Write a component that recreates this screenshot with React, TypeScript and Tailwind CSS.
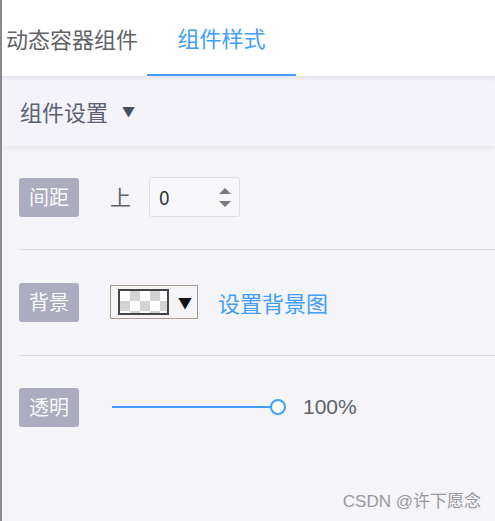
import React from "react";

const FONT = { fontFamily: '"Noto Sans CJK SC", "Noto Sans", sans-serif' };

// Small label badge on the left of each setting row
function Badge({ text }: { text: string }) {
  return (
    <div className="w-[60px] h-[39px] rounded-[3px] bg-[#abacc0] text-white/95 text-[20px] flex items-center justify-center shrink-0">
      {text}
    </div>
  );
}

export default function App() {
  return (
    <div
      className="w-[495px] h-[521px] overflow-hidden bg-[#f4f4f9] border-l-2 border-[#8a8a8a] flex flex-col"
      style={FONT}
    >
      {/* Tabs */}
      <div className="h-[76px] bg-white flex shrink-0">
        <div className="w-[145px] flex items-center pl-[4px] text-[22px] text-[#606266]">
          动态容器组件
        </div>
        <div className="w-[149px] flex items-center justify-center text-[22px] text-[#409eff] border-b-2 border-[#409eff]">
          组件样式
        </div>
      </div>

      {/* Section header */}
      <div className="h-[70px] shrink-0 bg-[#f3f3f9] flex items-center px-[18px] text-[22px] text-[#5c6075] shadow-[inset_0_5px_5px_-3px_rgba(0,0,0,0.07),0_3px_4px_rgba(0,0,0,0.05)] relative z-10">
        <span>组件设置</span>
        <span className="ml-[14px] text-[13px] text-[#4b4e63]">▼</span>
      </div>

      {/* Rows */}
      <div className="px-[17px] flex flex-col">
        <div className="flex items-center h-[40px] mt-[31px] mb-[32px]">
          <Badge text="间距" />
          <span className="ml-[31px] text-[21px] text-[#606266]">上</span>
          <div className="ml-[18px] w-[91px] h-[40px] rounded-[3px] border border-[#dcdfe6] bg-[#f7f7f9] flex items-center justify-between pl-[9px] pr-[8px]">
            <span className="text-[19px] text-[#303133]">0</span>
            <div className="flex flex-col gap-[7px]">
              <svg width="12" height="6" viewBox="0 0 12 6">
                <path d="M6 0 L12 6 L0 6 Z" fill="#7a7a7a" />
              </svg>
              <svg width="12" height="6" viewBox="0 0 12 6">
                <path d="M0 0 L12 0 L6 6 Z" fill="#7a7a7a" />
              </svg>
            </div>
          </div>
        </div>
        <div className="h-px bg-[#dcdde6] mr-[-20px]" />

        <div className="flex items-center h-[40px] mt-[32px] mb-[33px]">
          <Badge text="背景" />
          <div className="ml-[31px] w-[88px] h-[34px] border border-[#a89b8c] flex items-center pl-[7px]">
            <div
              className="w-[51px] h-[26px] border-2 border-[#444]"
              style={{
                backgroundColor: "#fff",
                backgroundImage:
                  "linear-gradient(45deg,#d3d3d3 25%,transparent 25%,transparent 75%,#d3d3d3 75%),linear-gradient(45deg,#d3d3d3 25%,transparent 25%,transparent 75%,#d3d3d3 75%)",
                backgroundSize: "20px 20px",
                backgroundPosition: "0 0,10px 10px",
              }}
            />
            <span className="ml-[9px] text-[14px] text-[#111]">▼</span>
          </div>
          <span className="ml-[20px] text-[22px] text-[#409eff]">设置背景图</span>
        </div>
        <div className="h-px bg-[#dcdde6] mr-[-20px]" />

        <div className="flex items-center h-[40px] mt-[31px]">
          <Badge text="透明" />
          <div className="ml-[33px] w-[175px] h-[18px] flex items-center relative">
            <div className="w-[160px] h-[2px] bg-[#409eff]" />
            <div className="absolute left-[158px] top-[1px] w-[16px] h-[16px] rounded-full border-[2.5px] border-[#409eff] bg-white" />
          </div>
          <span className="ml-[16px] text-[21px] text-[#606266]" style={{ fontFamily: '"Liberation Sans", sans-serif' }}>
            100%
          </span>
        </div>
      </div>

      <div
        className="mt-auto mb-[7px] self-end mr-[14px] text-[17px] text-[#999]"
        style={{ fontFamily: '"Liberation Sans", "Noto Sans CJK SC", sans-serif' }}
      >
        CSDN @许下愿念
      </div>
    </div>
  );
}
